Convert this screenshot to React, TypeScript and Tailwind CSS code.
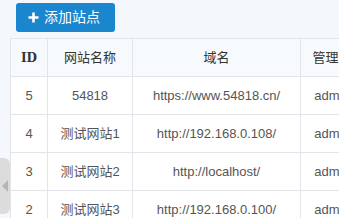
const rows = [
  { id: 5, name: "54818", domain: "https://www.54818.cn/", admin: "admin" },
  { id: 4, name: "测试网站1", domain: "http://192.168.0.108/", admin: "admin" },
  { id: 3, name: "测试网站2", domain: "http://localhost/", admin: "admin" },
  { id: 2, name: "测试网站3", domain: "http://192.168.0.100/", admin: "admin" },
];

const font = { fontFamily: '"Liberation Sans", "Noto Sans CJK SC", sans-serif' };

export default function App() {
  return (
    <div className="relative w-[339px] h-[218px] overflow-hidden bg-[#f4f8fc]" style={font}>
      <div className="pl-4 pt-[3px] h-[38px]">
        <button className="flex items-center gap-[5px] h-[29px] w-[99px] pl-[12px] rounded-[3px] bg-[#1a86cd] text-white text-[14px]">
          <svg width="11" height="11" viewBox="0 0 11 11">
            <path d="M5.5 0.5v10M0.5 5.5h10" stroke="white" strokeWidth="2.6" />
          </svg>
          添加站点
        </button>
      </div>

      <div className="ml-[10px]">
        <table className="border-collapse table-fixed w-[420px]">
          <colgroup>
            <col className="w-[37px]" />
            <col className="w-[85px]" />
            <col className="w-[168px]" />
            <col className="w-[63px]" />
            <col className="w-[67px]" />
          </colgroup>
          <thead>
            <tr className="h-[38px] bg-[#f7fafd] text-[13px] text-[#333]">
              <th className="border border-[#e2e6ea] font-bold" style={{ fontFamily: '"DejaVu Serif", serif', fontSize: 12 }}>ID</th>
              <th className="border border-[#e2e6ea] font-normal">网站名称</th>
              <th className="border border-[#e2e6ea] font-normal">域名</th>
              <th className="border border-[#e2e6ea] font-normal whitespace-nowrap">管理员</th>
              <th className="border border-[#e2e6ea] font-normal">操作</th>
            </tr>
          </thead>
          <tbody className="bg-white text-[13px] text-[#555]">
            {rows.map((r) => (
              <tr key={r.id} className="h-[38px]">
                <td className="border border-[#e2e6ea] text-center">{r.id}</td>
                <td className="border border-[#e2e6ea] text-center text-[#555]">{r.name}</td>
                <td className="border border-[#e2e6ea] text-center">{r.domain}</td>
                <td className="border border-[#e2e6ea] text-center">{r.admin}</td>
                <td className="border border-[#e2e6ea]" />
              </tr>
            ))}
          </tbody>
        </table>
      </div>

      <div className="absolute left-0 top-[158px] w-[10px] h-[56px] rounded-r-[6px] bg-[#dcdcdc] flex items-center justify-center">
        <div className="w-0 h-0 border-y-[6px] border-y-transparent border-r-[6px] border-r-[#b5b5b5]" />
      </div>
    </div>
  );
}
